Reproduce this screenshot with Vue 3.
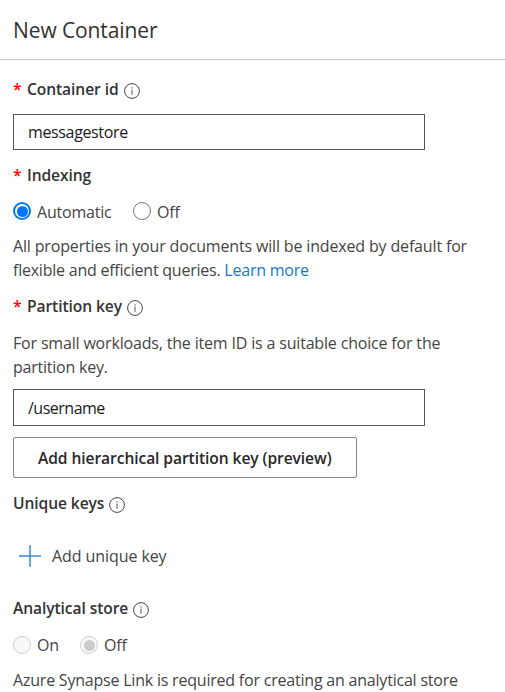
<script setup>
import { ref, h } from 'vue'

const containerId = ref('messagestore')
const partitionKey = ref('/username')

const InfoIcon = () =>
  h('svg', { width: 16, height: 16, viewBox: '0 0 16 16', fill: 'none', 'aria-label': 'Info' }, [
    h('circle', { cx: 8, cy: 8, r: 7.4, stroke: '#444', 'stroke-width': 1 }),
    h('path', { d: 'M8 6.5V11.8', stroke: '#555', 'stroke-width': 1 }),
    h('path', { d: 'M8 4.2V5.4', stroke: '#555', 'stroke-width': 1.1 }),
  ])
</script>

<template>
  <main class="panel">
    <header class="header"><h1>New Container</h1></header>
    <form class="form" @submit.prevent>
      <div class="label container-label"><b class="star">*</b><span>Container id</span><InfoIcon class="info" /></div>
      <input v-model="containerId" class="field id-field" type="text" aria-label="Container id" />

      <div class="label indexing-label"><b class="star">*</b><span>Indexing</span></div>
      <div class="radios">
        <span class="radio checked"></span><span class="auto">Automatic</span>
        <span class="radio"></span><span>Off</span>
      </div>
      <p class="copy indexing-copy">
        <span class="properties">All properties in your documents will be indexed by default for</span><br />
        <span class="queries">flexible and efficient queries. <a>Learn more</a></span>
      </p>

      <div class="label partition-label"><b class="star">*</b><span>Partition key</span><InfoIcon class="info" /></div>
      <p class="copy partition-copy">
        For small workloads, the item ID is a suitable choice for the<br />
        <span class="queries">partition key.</span>
      </p>
      <input v-model="partitionKey" class="field key-field" type="text" aria-label="Partition key" />
      <button class="hierarchy" type="button">Add hierarchical partition key (preview)</button>

      <div class="label unique-label"><span>Unique keys</span><InfoIcon class="info" /></div>
      <div class="add">
        <svg width="22" height="22" viewBox="0 0 22 22"><path d="M0 11H22M11 0V22" stroke="#3c8bd0" stroke-width="1.5" /></svg>
        <span>Add unique key</span>
      </div>

      <div class="label analytical-label"><span>Analytical store</span><InfoIcon class="info" /></div>
      <div class="radios disabled">
        <span class="radio"></span><span class="on">On</span>
        <span class="radio checked"></span><span>Off</span>
      </div>
      <p class="copy synapse">Azure Synapse Link is required for creating an analytical store</p>
    </form>
  </main>
</template>

<style>
body { background: #fff; overflow: hidden; }
</style>

<style scoped>
* { box-sizing: border-box; }
.panel {
  width: 505px; height: 692px; overflow: hidden; background: #fff;
  font-family: "Open Sans", "Noto Sans", sans-serif;
  font-size: 16px; line-height: 24px; color: #444; white-space: nowrap;
}
.header { height: 60px; border-bottom: 1px solid #c8c8c8; padding: 15px 13px 0; }
h1 { margin: 0; font-size: 21px; line-height: 30px; font-weight: 400; color: #323130; letter-spacing: -0.1px; }
.form { display: flex; flex-direction: column; align-items: flex-start; padding: 17px 13px 0; }
.label { display: flex; align-items: center; height: 24px; font-weight: 550; color: #333; font-size: 15.6px; letter-spacing: -0.09px; }
.star { width: 14px; color: #f00; font-weight: 600; }
.info { margin: 3px 0 0 5px; flex: none; }
.field {
  width: 412px; margin: 13px 0 0; padding: 0 14px; border: 1px solid #555; border-radius: 0;
  background: #fff; color: #1a1a1a; font: inherit; letter-spacing: -0.36px; outline: none;
}
.id-field { height: 36px; }
.key-field { height: 37px; margin-top: 10px; letter-spacing: -0.5px; }
.indexing-label { margin-top: 13px; }
.radios { display: flex; align-items: center; height: 24px; margin-top: 12px; letter-spacing: -0.2px; }
.radio {
  width: 18px; height: 18px; margin-right: 6px; border: 1.5px solid #767676;
  border-radius: 50%; display: grid; place-items: center; flex: none;
}
.radio + span { padding-top: 1px; }
.radio.checked { border: 2px solid #0075ff; }
.radio.checked::after { content: ""; width: 11px; height: 11px; border-radius: 50%; background: #0075ff; }
.auto { width: 96px; }
.on { width: 43px; }
.copy { margin: 11px 0 0; }
.properties { letter-spacing: -0.16px; }
.queries { letter-spacing: -0.23px; }
a { color: #0f7ad3; }
.partition-label { margin-top: 12px; }
.partition-copy { margin-top: 13px; letter-spacing: -0.175px; }
.synapse { letter-spacing: -0.21px; }
.hierarchy {
  width: 344px; height: 41px; margin: 11px 0 0; padding: 0 0 0 24px; text-align: left;
  border: 1px solid #858585; border-radius: 2px; background: #fff; color: #292827;
  font: 550 15.6px/24px "Open Sans", "Noto Sans", sans-serif; letter-spacing: -0.08px;
}
.unique-label { margin-top: 13px; }
.add { display: flex; align-items: center; height: 24px; margin-top: 29px; padding-left: 6px; gap: 11px; letter-spacing: -0.08px; }
.analytical-label { margin-top: 28px; }
.disabled .radio, .disabled .radio.checked { border: 1.5px solid #cfcfcf; background: #f8f8f8; }
.disabled { margin-top: 13px; }
.disabled .radio + span { padding-top: 0; }
.disabled .radio.checked::after { background: #cbcbcb; }
</style>
